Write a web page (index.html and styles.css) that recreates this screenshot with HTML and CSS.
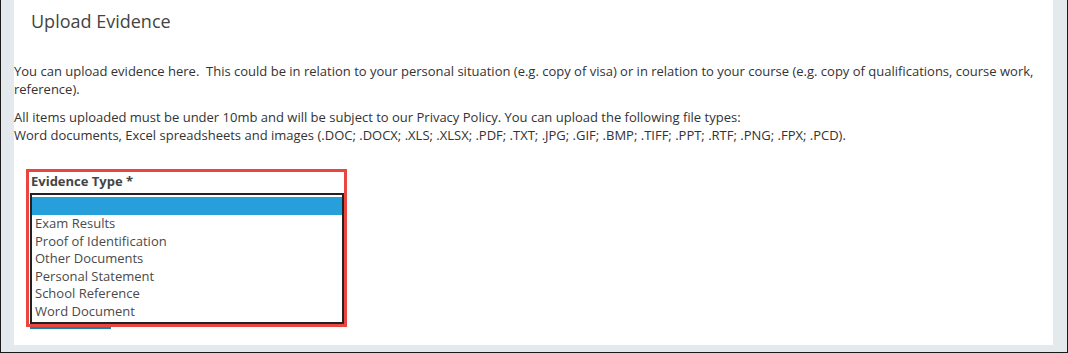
FILE: index.html
```html
<!DOCTYPE html>
<html lang="en">
<head>
<meta charset="utf-8">
<title>Upload Evidence</title>
<link rel="stylesheet" href="styles.css">
</head>
<body>
<div class="frame">
  <section class="panel">
    <h2 class="title">Upload Evidence</h2>
    <p class="text">You can upload evidence here.&nbsp; This could be in relation to your personal situation (e.g. copy of visa) or in relation to your course (e.g. copy of qualifications, course work, reference).</p>
    <p class="text">All items uploaded must be under 10mb and will be subject to our Privacy Policy. You can upload the following file types:<br>Word documents, Excel spreadsheets and images (.DOC; .DOCX; .XLS; .XLSX; .PDF; .TXT; .JPG; .GIF; .BMP; .TIFF; .PPT; .RTF; .PNG; .FPX; .PCD).</p>
    <div class="field">
      <label class="label">Evidence Type *</label>
      <div class="listbox" role="listbox">
        <div class="option selected" role="option"></div>
        <div class="option" role="option">Exam Results</div>
        <div class="option" role="option">Proof of Identification</div>
        <div class="option" role="option">Other Documents</div>
        <div class="option" role="option">Personal Statement</div>
        <div class="option" role="option">School Reference</div>
        <div class="option" role="option">Word Document</div>
      </div>
    </div>
    <button class="upload-btn" type="button" aria-label="Upload"></button>
  </section>
</div>
</body>
</html>
```
FILE: styles.css
```css
html, body {
  margin: 0;
  padding: 0;
  background: #ffffff;
}
body {
  font-family: "Open Sans", "Liberation Sans", sans-serif;
  color: #333333;
}
.frame {
  box-sizing: border-box;
  width: 1068px;
  height: 353px;
  background: #e4e9ed;
  border: 1px solid #1a1a1a;
  border-top: none;
  padding: 0 14px 7px 13px;
  display: flex;
}
.panel {
  flex: 1;
  background: #ffffff;
  padding-top: 9px;
  display: flex;
  flex-direction: column;
  align-items: flex-start;
}
.title {
  margin: 0 0 0 17px;
  font-size: 18px;
  line-height: 24px;
  font-weight: 400;
  color: #444444;
}
.text {
  margin: 30px 0 0 0;
  font-size: 13px;
  line-height: 17.5px;
  color: #333333;
}
.text + .text {
  margin-top: 11px;
}
.field {
  position: relative;
  z-index: 1;
  background: #ffffff;
  margin: 25px 0 0 12px;
  width: 321px;
  box-sizing: border-box;
  border: 3px solid #e8463e;
  padding: 0 0 0 1px;
}
.label {
  display: block;
  padding-left: 1px;
  font-size: 13px;
  line-height: 18px;
  font-weight: 700;
  color: #444444;
  margin-bottom: 3px;
}
.listbox {
  box-sizing: border-box;
  width: 314px;
  border: 2px solid #222222;
  padding: 2px 0 1px 0;
}
.option {
  font-size: 13px;
  line-height: 17.6px;
  height: 17.6px;
  padding-left: 3px;
  color: #4a4a4a;
}
.option.selected {
  background: #279fda;
  height: 18px;
}
.upload-btn {
  margin: -28px 0 0 16px;
  width: 81px;
  height: 30px;
  border: none;
  background: #1a7fad;
  padding: 0;
}
```
